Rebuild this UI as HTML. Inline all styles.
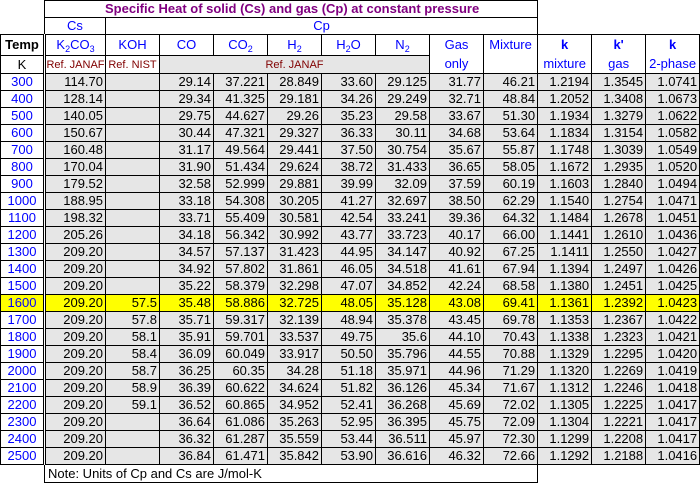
<!DOCTYPE html>
<html><head><meta charset="utf-8"><style>
body{margin:0;background:#fff;width:700px;height:483px;overflow:hidden;font-family:"Liberation Sans",Arial,sans-serif;}
table{border-collapse:collapse;table-layout:fixed;position:absolute;left:0;top:0;width:700px;font-size:13px;}
td{border:1px solid #000;padding:0 2px 0 0;height:16px;line-height:16px;white-space:nowrap;overflow:hidden;text-align:right;background:#e6e6e6;color:#000;}
td.n{border:none;background:#fff;}
td.t{background:#fff;color:#00f;text-align:center;border-right:3px double #000;padding:0;}
td.h{background:#fff;color:#00f;text-align:center;padding:0;}
td.hb{font-weight:bold;}
td.r{color:#800000;font-size:11px;text-align:center;padding:0;}
td.rw{background:#fff;}
td.title{background:#fff;color:#800080;font-weight:bold;text-align:left;padding-left:60px;}
tr.y td{background:#ff0;}
tr.y td.t{background:#ff0;color:#00f;}
td.note{background:#fff;text-align:left;padding-left:3px;height:17px;}
sub{font-size:9px;vertical-align:-3px;line-height:0;}
tr.h1 td{height:16px;}
tr.h3 td{height:20px;}
tr.h4 td{height:17px;}
</style></head><body>
<table>
<colgroup><col style="width:44px"><col style="width:61px"><col style="width:54px"><col style="width:54px"><col style="width:54px"><col style="width:54px"><col style="width:54px"><col style="width:54px"><col style="width:54px"><col style="width:54px"><col style="width:54px"><col style="width:54px"><col style="width:54px"></colgroup>
<tr class="h1"><td class="n"></td><td class="title" colspan="9">Specific Heat of solid (Cs) and gas (Cp) at constant pressure</td><td class="n"></td><td class="n"></td><td class="n"></td></tr>
<tr class="h1"><td class="n" style="border-bottom:1px solid #000"></td><td class="h">Cs</td><td class="h" colspan="8">Cp</td><td class="n" style="border-bottom:1px solid #000"></td><td class="n" style="border-bottom:1px solid #000"></td><td class="n" style="border-bottom:1px solid #000"></td></tr>
<tr class="h3"><td class="t hb" style="color:#000">Temp</td><td class="h">K<sub>2</sub>CO<sub>3</sub></td><td class="h">KOH</td><td class="h">CO</td><td class="h">CO<sub>2</sub></td><td class="h">H<sub>2</sub></td><td class="h">H<sub>2</sub>O</td><td class="h">N<sub>2</sub></td><td class="h" rowspan="2" style="line-height:19px">Gas<br>only</td><td class="h" rowspan="2" style="vertical-align:top;line-height:19px">Mixture</td><td class="h" rowspan="2" style="line-height:19px"><b>k</b><br>mixture</td><td class="h" rowspan="2" style="line-height:19px"><b>k'</b><br>gas</td><td class="h" rowspan="2" style="line-height:19px"><b>k</b><br>2-phase</td></tr>
<tr class="h4"><td class="t" style="color:#000">K</td><td class="r rw">Ref. JANAF</td><td class="r rw">Ref. NIST</td><td class="r" colspan="5">Ref. JANAF</td></tr>
<tr><td class="t">300</td><td>114.70</td><td></td><td>29.14</td><td>37.221</td><td>28.849</td><td>33.60</td><td>29.125</td><td>31.77</td><td>46.21</td><td>1.2194</td><td>1.3545</td><td>1.0741</td></tr>
<tr><td class="t">400</td><td>128.14</td><td></td><td>29.34</td><td>41.325</td><td>29.181</td><td>34.26</td><td>29.249</td><td>32.71</td><td>48.84</td><td>1.2052</td><td>1.3408</td><td>1.0673</td></tr>
<tr><td class="t">500</td><td>140.05</td><td></td><td>29.75</td><td>44.627</td><td>29.26</td><td>35.23</td><td>29.58</td><td>33.67</td><td>51.30</td><td>1.1934</td><td>1.3279</td><td>1.0622</td></tr>
<tr><td class="t">600</td><td>150.67</td><td></td><td>30.44</td><td>47.321</td><td>29.327</td><td>36.33</td><td>30.11</td><td>34.68</td><td>53.64</td><td>1.1834</td><td>1.3154</td><td>1.0582</td></tr>
<tr><td class="t">700</td><td>160.48</td><td></td><td>31.17</td><td>49.564</td><td>29.441</td><td>37.50</td><td>30.754</td><td>35.67</td><td>55.87</td><td>1.1748</td><td>1.3039</td><td>1.0549</td></tr>
<tr><td class="t">800</td><td>170.04</td><td></td><td>31.90</td><td>51.434</td><td>29.624</td><td>38.72</td><td>31.433</td><td>36.65</td><td>58.05</td><td>1.1672</td><td>1.2935</td><td>1.0520</td></tr>
<tr><td class="t">900</td><td>179.52</td><td></td><td>32.58</td><td>52.999</td><td>29.881</td><td>39.99</td><td>32.09</td><td>37.59</td><td>60.19</td><td>1.1603</td><td>1.2840</td><td>1.0494</td></tr>
<tr><td class="t">1000</td><td>188.95</td><td></td><td>33.18</td><td>54.308</td><td>30.205</td><td>41.27</td><td>32.697</td><td>38.50</td><td>62.29</td><td>1.1540</td><td>1.2754</td><td>1.0471</td></tr>
<tr><td class="t">1100</td><td>198.32</td><td></td><td>33.71</td><td>55.409</td><td>30.581</td><td>42.54</td><td>33.241</td><td>39.36</td><td>64.32</td><td>1.1484</td><td>1.2678</td><td>1.0451</td></tr>
<tr><td class="t">1200</td><td>205.26</td><td></td><td>34.18</td><td>56.342</td><td>30.992</td><td>43.77</td><td>33.723</td><td>40.17</td><td>66.00</td><td>1.1441</td><td>1.2610</td><td>1.0436</td></tr>
<tr><td class="t">1300</td><td>209.20</td><td></td><td>34.57</td><td>57.137</td><td>31.423</td><td>44.95</td><td>34.147</td><td>40.92</td><td>67.25</td><td>1.1411</td><td>1.2550</td><td>1.0427</td></tr>
<tr><td class="t">1400</td><td>209.20</td><td></td><td>34.92</td><td>57.802</td><td>31.861</td><td>46.05</td><td>34.518</td><td>41.61</td><td>67.94</td><td>1.1394</td><td>1.2497</td><td>1.0426</td></tr>
<tr><td class="t">1500</td><td>209.20</td><td></td><td>35.22</td><td>58.379</td><td>32.298</td><td>47.07</td><td>34.852</td><td>42.24</td><td>68.58</td><td>1.1380</td><td>1.2451</td><td>1.0425</td></tr>
<tr class="y"><td class="t">1600</td><td>209.20</td><td>57.5</td><td>35.48</td><td>58.886</td><td>32.725</td><td>48.05</td><td>35.128</td><td>43.08</td><td>69.41</td><td>1.1361</td><td>1.2392</td><td>1.0423</td></tr>
<tr><td class="t">1700</td><td>209.20</td><td>57.8</td><td>35.71</td><td>59.317</td><td>32.139</td><td>48.94</td><td>35.378</td><td>43.45</td><td>69.78</td><td>1.1353</td><td>1.2367</td><td>1.0422</td></tr>
<tr><td class="t">1800</td><td>209.20</td><td>58.1</td><td>35.91</td><td>59.701</td><td>33.537</td><td>49.75</td><td>35.6</td><td>44.10</td><td>70.43</td><td>1.1338</td><td>1.2323</td><td>1.0421</td></tr>
<tr><td class="t">1900</td><td>209.20</td><td>58.4</td><td>36.09</td><td>60.049</td><td>33.917</td><td>50.50</td><td>35.796</td><td>44.55</td><td>70.88</td><td>1.1329</td><td>1.2295</td><td>1.0420</td></tr>
<tr><td class="t">2000</td><td>209.20</td><td>58.7</td><td>36.25</td><td>60.35</td><td>34.28</td><td>51.18</td><td>35.971</td><td>44.96</td><td>71.29</td><td>1.1320</td><td>1.2269</td><td>1.0419</td></tr>
<tr><td class="t">2100</td><td>209.20</td><td>58.9</td><td>36.39</td><td>60.622</td><td>34.624</td><td>51.82</td><td>36.126</td><td>45.34</td><td>71.67</td><td>1.1312</td><td>1.2246</td><td>1.0418</td></tr>
<tr><td class="t">2200</td><td>209.20</td><td>59.1</td><td>36.52</td><td>60.865</td><td>34.952</td><td>52.41</td><td>36.268</td><td>45.69</td><td>72.02</td><td>1.1305</td><td>1.2225</td><td>1.0417</td></tr>
<tr><td class="t">2300</td><td>209.20</td><td></td><td>36.64</td><td>61.086</td><td>35.263</td><td>52.95</td><td>36.395</td><td>45.75</td><td>72.09</td><td>1.1304</td><td>1.2221</td><td>1.0417</td></tr>
<tr><td class="t">2400</td><td>209.20</td><td></td><td>36.32</td><td>61.287</td><td>35.559</td><td>53.44</td><td>36.511</td><td>45.97</td><td>72.30</td><td>1.1299</td><td>1.2208</td><td>1.0417</td></tr>
<tr><td class="t">2500</td><td>209.20</td><td></td><td>36.84</td><td>61.471</td><td>35.842</td><td>53.90</td><td>36.616</td><td>46.32</td><td>72.66</td><td>1.1292</td><td>1.2188</td><td>1.0416</td></tr>
<tr><td class="n" style="border-top:1px solid #000"></td><td class="note" colspan="9">Note: Units of Cp and Cs are J/mol-K</td><td class="n" style="border-top:1px solid #000"></td><td class="n" style="border-top:1px solid #000"></td><td class="n" style="border-top:1px solid #000"></td></tr>
</table>
</body></html>
